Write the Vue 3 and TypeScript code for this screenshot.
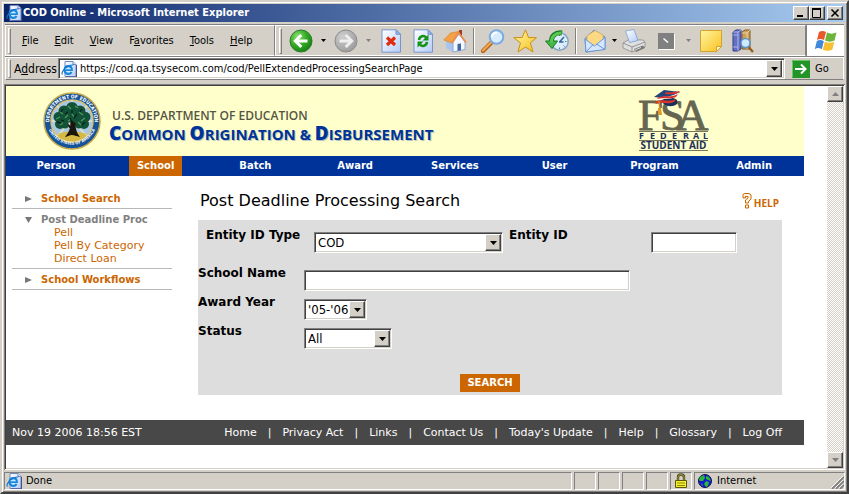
<script setup lang="ts">
import { ref } from 'vue'

const menus = ['File', 'Edit', 'View', 'Favorites', 'Tools', 'Help']
const accessKeys: Record<string, number> = { Favorites: 1 }
const tabs = ['Person', 'School', 'Batch', 'Award', 'Services', 'User', 'Program', 'Admin']
const activeTab = ref('School')
const footerLinks = ['Home', 'Privacy Act', 'Links', 'Contact Us', "Today's Update", 'Help', 'Glossary', 'Log Off']
const subLinks = ['Pell', 'Pell By Category', 'Direct Loan']

const address = ref('https://cod.qa.tsysecom.com/cod/PellExtendedProcessingSearchPage')
const entityType = ref('COD')
const entityId = ref('')
const schoolName = ref('')
const awardYear = ref("'05-'06")
const status = ref('All')

function keyAt(menu: string): number {
  return accessKeys[menu] ?? 0
}
</script>

<template>
  <div class="window">
    <svg class="defs" aria-hidden="true">
      <defs>
        <linearGradient id="paper" x1="0" y1="0" x2="1" y2="1">
          <stop offset="0" stop-color="#ffffff" />
          <stop offset="1" stop-color="#b4cdf6" />
        </linearGradient>
        <radialGradient id="green" cx="0.35" cy="0.3" r="0.8">
          <stop offset="0" stop-color="#8fe070" />
          <stop offset="0.5" stop-color="#35ab25" />
          <stop offset="1" stop-color="#117a10" />
        </radialGradient>
        <radialGradient id="grey" cx="0.35" cy="0.3" r="0.8">
          <stop offset="0" stop-color="#cfcfcf" />
          <stop offset="1" stop-color="#989898" />
        </radialGradient>
        <linearGradient id="gold" x1="0" y1="0" x2="1" y2="1">
          <stop offset="0" stop-color="#fff6a0" />
          <stop offset="1" stop-color="#f8c020" />
        </linearGradient>
        <symbol id="ie-page" viewBox="0 0 16 16">
          <path d="M4 .5h8l3 3v12H4z" fill="url(#paper)" stroke="#7088c0" />
          <path d="M12 .5v3h3" fill="#dbe7ff" stroke="#7088c0" />
          <path d="M15.500 4v12H5" fill="none" stroke="#405090" />
          <path d="M3.600 9h7.200c0-5-7-5.200-7.200 0c0 4.600 5.400 4.900 6.900 2" fill="none" stroke="#1689dd" stroke-width="2.200" />
          <path d="M1.500 13.500C-1 12 6 3.500 12.500 4" fill="none" stroke="#1b70c4" stroke-width="1.100" />
          <path d="M4 8h6" stroke="#a4e4ff" stroke-width=".7" />
        </symbol>
        <symbol id="sheet" viewBox="0 0 24 24">
          <path d="M3 .8h14l4.500 4.500V23.200H3z" fill="url(#paper)" stroke="#7795cc" />
          <path d="M17 .8v4.500h4.500z" fill="#91b2ec" stroke="#7795cc" />
        </symbol>
      </defs>
    </svg>

    <header class="titlebar">
      <svg class="small-icon"><use href="#ie-page" /></svg>
      <span class="caption">COD Online - Microsoft Internet Explorer</span>
      <div class="window-buttons">
        <button class="raised" aria-label="Minimize">
          <svg viewBox="0 0 12 10"><path d="M2 8h6" stroke="#000" stroke-width="2" /></svg>
        </button>
        <button class="raised" aria-label="Maximize">
          <svg viewBox="0 0 12 10"><path d="M1.500 1v8.500h8V1M1 1h9" fill="none" stroke="#000" stroke-width="1" /><path d="M1 1h9" stroke="#000" stroke-width="2" /></svg>
        </button>
        <button class="raised close" aria-label="Close">
          <svg viewBox="0 0 12 10"><path d="M2.500 1.500l7 7m0-7l-7 7" stroke="#000" stroke-width="1.600" /></svg>
        </button>
      </div>
    </header>

    <div class="bars">
      <div class="bar-row">
        <nav class="menus">
          <i class="grip"></i>
          <button v-for="m in menus" :key="m">{{ m.slice(0, keyAt(m)) }}<u>{{ m[keyAt(m)] }}</u>{{ m.slice(keyAt(m) + 1) }}</button>
        </nav>
        <div class="tools">
          <i class="grip"></i>
          <button class="tool" aria-label="Back">
            <svg viewBox="0 0 24 24"><circle cx="12" cy="12" r="11" fill="url(#green)" stroke="#2e7d2c" /><path d="M18.500 12H7M12.300 6L6.300 12l6 6" fill="none" stroke="#fff" stroke-width="3" /></svg>
          </button>
          <button class="caret" aria-label="Back history"><svg viewBox="0 0 5 3"><path d="M0 0h5L2.500 3z" /></svg></button>
          <button class="tool" aria-label="Forward">
            <svg viewBox="0 0 24 24"><circle cx="12" cy="12" r="11" fill="url(#grey)" stroke="#8c8c8c" /><path d="M5.500 12H17M11.700 6l6 6l-6 6" fill="none" stroke="#eee" stroke-width="3" /></svg>
          </button>
          <button class="caret dim" aria-label="Forward history"><svg viewBox="0 0 5 3"><path d="M0 0h5L2.500 3z" /></svg></button>
          <button class="tool" aria-label="Stop">
            <svg viewBox="0 0 24 24"><use href="#sheet" /><path d="M8 8.500l8 7.500m0-7.500l-8 7.500" stroke="#e02c10" stroke-width="3.200" /></svg>
          </button>
          <button class="tool" aria-label="Refresh">
            <svg viewBox="0 0 24 24"><use href="#sheet" /><path d="M8 11c.5-4 5-5 7-2.500M16 13c-.5 4-5 5-7 2.500" fill="none" stroke="#169216" stroke-width="2.500" /><path d="M17.500 5.500v6h-6zM6.500 18.500v-6h6z" fill="#169216" /></svg>
          </button>
          <button class="tool" aria-label="Home">
            <svg viewBox="0 0 24 24"><path d="M16 1h3v8h-3z" fill="#a03c28" /><path d="M3 11l7 2v10l-7-4z" fill="#a9c5ee" /><path d="M10 13l6-8l6 8v7.500L10 23z" fill="#f3f7ff" stroke="#7b99ce" stroke-width=".8" /><path d="M14.500 15l3.500-.5v6.800l-3.500.7z" fill="#4264a8" /><path d="M.8 11L7.500 4l8-1.500L9 14z" fill="#f4a245" stroke="#d27c28" stroke-width=".6" /><path d="M9 14l6.500-10.500L23 13.500" fill="none" stroke="#ee8c48" stroke-width="1.600" /></svg>
          </button>
          <i class="sep"></i>
          <button class="tool" aria-label="Search">
            <svg viewBox="0 0 24 24"><path d="M2 22l8-8" stroke="#b76018" stroke-width="4.400" stroke-linecap="round" /><path d="M2 21.500l8-8" stroke="#f3a850" stroke-width="2.200" stroke-linecap="round" /><circle cx="15.500" cy="8" r="6.800" fill="#d5edfd" stroke="#7daadf" stroke-width="2" /><path d="M11 8c0-3 2-4.500 5-4.500" fill="none" stroke="#fff" stroke-width="2" /></svg>
          </button>
          <button class="tool" aria-label="Favorites">
            <svg viewBox="0 0 24 24"><path d="M12.500.8l3 7.700l8 .2l-6.200 5.200l2.800 9.100l-7.600-5l-7.500 5l2.500-9.100L.8 8.700l8.300-.2z" fill="url(#gold)" stroke="#c89018" /></svg>
          </button>
          <button class="tool" aria-label="History">
            <svg viewBox="0 0 24 24"><circle cx="14.500" cy="12.500" r="8.700" fill="#dceefb" stroke="#87a5c4" stroke-width="1.500" /><path d="M14.500 13l4.500-5M14 13h4.500" stroke="#34699c" stroke-width="1.600" /><path d="M21.500 12.500h-1.500M19.500 17.500l-1-1M14.500 20v-1.500M14.500 5.500V7" stroke="#5a7890" /><path d="M6.500 13C6 7 10.500 3 17 4" fill="none" stroke="#187a20" stroke-width="5" /><path d="M.5 12h12L7 19.500z" fill="#45b845" stroke="#187a20" /><path d="M6.500 13.500C6 7.500 10.500 3.500 16.500 4" fill="none" stroke="#58c850" stroke-width="3" /></svg>
          </button>
          <i class="sep"></i>
          <button class="tool" aria-label="Mail">
            <svg viewBox="0 0 24 24"><path d="M2 9.500L11 1l11 7v12L3 23z" fill="#8eb6f0" stroke="#668fd0" /><path d="M4 7L12 1.500L20 6v8l-8 4l-8-5z" fill="#fdd983" stroke="#d7a84d" stroke-width=".7" /><path d="M2 10l9.500 7L22 8.500v12L3 23z" fill="#d4e7ff" stroke="#6b95d6" /><path d="M3 23l7-7.500M22 20.500L13.500 15" stroke="#6b95d6" /></svg>
          </button>
          <button class="caret compact" aria-label="Mail options"><svg viewBox="0 0 5 3"><path d="M0 0h5L2.500 3z" /></svg></button>
          <button class="tool" aria-label="Print">
            <svg viewBox="0 0 24 24"><path d="M1 14l6-3.500l14 .5l2 2v5L10 23l-9-4z" fill="#dfdfdf" stroke="#8a8a8a" stroke-width=".8" /><path d="M3.500 2L12 .5l4 11l-8.500 2z" fill="url(#paper)" stroke="#7e9ed0" stroke-width=".8" /><path d="M1 14l9 4l13-5M10 18v5" fill="none" stroke="#959595" /><path d="M12 20l9-3.500l2 2.500l-9 4z" fill="#777" /><path d="M13 21l6-2.500" stroke="#ddd" /></svg>
          </button>
          <button class="tool" aria-label="Edit">
            <svg viewBox="0 0 24 24"><path d="M5 20.500h15.500V5" fill="none" stroke="#fff" /><path d="M4 4h16v16H4z" fill="#808080" /><path d="M9.500 9.500l4.500 4" stroke="#fff" stroke-width="1.500" /></svg>
          </button>
          <button class="caret dim" aria-label="Edit options"><svg viewBox="0 0 5 3"><path d="M0 0h5L2.500 3z" /></svg></button>
          <button class="tool" aria-label="Discuss">
            <svg viewBox="0 0 24 24"><path d="M1.500 1.500h21v16l-5 5h-16z" fill="url(#gold)" stroke="#d3a32e" /><path d="M17.500 22.500v-5h5z" fill="#fff8c2" stroke="#d3a32e" /></svg>
          </button>
          <button class="tool" aria-label="Research">
            <svg viewBox="0 0 24 24"><path d="M2 3l3-2h5v19l-3 2H2z" fill="#6671c4" stroke="#333b88" /><path d="M2 3h5v19M2 6h5M2 18h5M7 3l3-2" fill="none" stroke="#bfc6f4" stroke-width=".8" /><path d="M11 3l3-2h5v19h-8z" fill="#caa05c" stroke="#7c5a26" /><path d="M11 4h5v16M16 4l3-3" fill="none" stroke="#f7e0a3" stroke-width=".8" /><path d="M17.500 18l4.500 5" stroke="#9c5c1c" stroke-width="2.500" /><circle cx="14.500" cy="14" r="4.500" fill="#cdeafb" stroke="#5c93c8" stroke-width="1.500" /></svg>
          </button>
        </div>
        <div class="brand">
          <svg viewBox="0 0 24 22" role="img" aria-label="Windows">
            <path d="M5 2c2-1.500 4.500-1.500 7 0l-2 8c-2.500-1.500-5-1.500-7 0z" fill="#e8582c" />
            <path d="M13 2.500c3 1.500 6 1.500 9.500 0l-2 8c-3 1.500-6.500 1.500-9.500 0z" fill="#6cb53c" />
            <path d="M2.800 11.200c2-1.500 4.500-1.500 7 0l-2 8c-2.500-1.500-5-1.500-7 0z" fill="#3f8ad8" />
            <path d="M10.800 11.700c3 1.500 6 1.500 9.500 0l-2 8c-3 1.500-6.500 1.500-9.500 0z" fill="#f8c030" />
          </svg>
        </div>
      </div>

      <form class="address-row" @submit.prevent>
        <i class="grip"></i>
        <label for="address">A<u>d</u>dress</label>
        <div class="address-box sunken">
          <svg class="small-icon"><use href="#ie-page" /></svg>
          <input id="address" v-model="address" type="text" spellcheck="false" />
          <button type="button" class="raised drop" aria-label="Recent addresses"><svg viewBox="0 0 7 4"><path d="M0 0h7L3.500 4z" /></svg></button>
        </div>
        <button class="go">
          <svg viewBox="0 0 18 18"><path d="M0 0h18v18H0z" fill="#239428" /><path d="M.5 17.500V.5h17" fill="none" stroke="#69c565" /><path d="M3 9h10M9 4.500L13.500 9L9 13.500" fill="none" stroke="#fff" stroke-width="2" /></svg>
          <span>Go</span>
        </button>
      </form>
    </div>

    <div class="viewport">
      <main class="page">
        <div class="banner">
          <svg class="seal" viewBox="0 0 58 58" role="img" aria-label="Department of Education seal">
            <defs>
              <path id="ring-top" d="M6.500 31A22.600 22.600 0 1 1 51.500 31" />
              <path id="ring-bottom" d="M4.500 34A25.400 25.400 0 0 0 53.500 34" />
            </defs>
            <circle cx="29" cy="29" r="28" fill="#15539a" stroke="#c4a94b" stroke-width="1.500" />
            <circle cx="29" cy="29" r="21" fill="#a9c8e6" stroke="#d8c16a" stroke-width="1.500" />
            <path d="M29 8v42M9 29h40M14 14l30 30M44 14L14 44" stroke="#e6e4bd" stroke-width="1.500" />
            <path d="M14 43c8-5 22-5 30 0c-8 9-22 9-30 0z" fill="#d5b943" />
            <path d="M27 28c1 7 0 11-5 17c4-1 5-2 7-2s4 1 8 2c-4-5-5-10-4-17z" fill="#1c170c" />
            <path d="M28 36l-8-8M31 34l8-7M29 35V20" stroke="#1c170c" stroke-width="2" />
            <g fill="#125239">
              <circle cx="29" cy="16" r="6" /><circle cx="21" cy="19" r="5.500" /><circle cx="37" cy="19" r="5.500" />
              <circle cx="15.500" cy="25" r="5" /><circle cx="42.500" cy="25" r="5" /><circle cx="24" cy="25" r="6" />
              <circle cx="34" cy="25" r="6" /><circle cx="17" cy="32" r="5" /><circle cx="41" cy="32" r="5" /><circle cx="36" cy="33" r="3.500" /><circle cx="22" cy="33" r="3.500" />
            </g>
            <path d="M17 20l3 2M25 14l3 3M32 14l3 2M13 27l4-2M22 26l3-3M29 22l2 3M36 20l4 3M38 29l4-3M17 33l3-2M35 30l3 3M25 29l3-2" stroke="#4f9a58" stroke-width="1.200" />
            <path d="M20 17l-2 3M29 18v3M34 22l-3 4M14 30l4 1M42 30l-3 3M25 20l-3 2M27 26l2 4M39 17l-2 3M21 29l-3-1" stroke="#06201a" stroke-width="1.300" />
            <text class="seal-text"><textPath href="#ring-top" startOffset="50%">DEPARTMENT OF EDUCATION</textPath></text>
            <text class="seal-text lower"><textPath href="#ring-bottom" startOffset="50%">UNITED STATES OF AMERICA</textPath></text>
          </svg>
          <div class="banner-text">
            <div class="dept">U.S. DEPARTMENT OF EDUCATION</div>
            <div class="system"><b>C</b>OMMON <b>O</b>RIGINATION &amp; <b>D</b>ISBURSEMENT</div>
          </div>
          <svg class="fsa" viewBox="0 0 72 64" role="img" aria-label="FSA Federal Student Aid">
            <text y="41" x="0 22 38" class="fsa-big">FSA</text>
            <path d="M22 12c7-4 13-4 17-1v4c-4 3-9 3-13 0z" fill="#17315e" />
            <path d="M16 8L26 1l16 2l-9 7z" fill="#24447a" />
            <path d="M20 10c6-4 10 0 21-7l-2 4c-8 5-12 1-21 5z" fill="#fff" />
            <path d="M28 3c5 1 8 0 14-1l-2 2c-5 2-8 1-13 1zM21 8c7-2 11 1 19-3l-2 3c-8 3-12 0-19 2zM17 13c7-4 14 1 21-3l-2 3c-7 3-13-1-18 2z" fill="#d8362a" />
            <path d="M21 12l1 8" stroke="#d48a1e" stroke-width="1.500" /><path d="M20 19h3l1 7h-4z" fill="#e09a28" />
            <path d="M1 42.500h69M1 51.500h69M1 61.500h69" stroke="#77775a" />
            <text y="50" x="1 12 22 34 45 55 65" class="fsa-line">FEDERAL</text>
            <text y="60" x="35.500" class="fsa-sub">STUDENT AID</text>
          </svg>
        </div>

        <nav class="tabs">
          <a v-for="t in tabs" :key="t" href="#" :class="{ active: t === activeTab }" @click.prevent="activeTab = t">{{ t }}</a>
        </nav>

        <div class="body">
          <aside class="side">
            <section>
              <a class="group" href="#"><svg viewBox="0 0 8 8"><path d="M0 1l7 3l-7 3z" /></svg>School Search</a>
            </section>
            <section>
              <a class="group open" href="#"><svg viewBox="0 0 8 8"><path d="M0 1h7L3.500 7z" /></svg>Post Deadline Proc</a>
              <a v-for="l in subLinks" :key="l" class="sub" href="#">{{ l }}</a>
            </section>
            <section>
              <a class="group" href="#"><svg viewBox="0 0 8 8"><path d="M0 1l7 3l-7 3z" /></svg>School Workflows</a>
            </section>
          </aside>

          <section class="content">
            <div class="heading">
              <h1>Post Deadline Processing Search</h1>
              <a class="help" href="#">
                <svg viewBox="0 0 10 16" aria-hidden="true"><path d="M1 1.500l1.500-1h4.500l2 1.500v4L6.500 8.500V10H3.500V7L6 5V3.500H3.500V5H1zM3.500 12h3v3h-3z" fill="#fff6e6" stroke="#cc6600" /></svg>HELP
              </a>
            </div>
            <form class="panel" @submit.prevent>
              <div class="row first">
                <label for="etype">Entity ID Type</label>
                <div class="select wide">
                  <select id="etype" v-model="entityType" class="sunken"><option>COD</option></select>
                  <span class="raised arrow"><svg viewBox="0 0 7 4"><path d="M0 0h7L3.500 4z" /></svg></span>
                </div>
                <label for="eid">Entity ID</label>
                <input id="eid" v-model="entityId" class="sunken" type="text" />
              </div>
              <div class="row">
                <label for="sname">School Name</label>
                <input id="sname" v-model="schoolName" class="sunken name" type="text" />
              </div>
              <div class="row">
                <label for="year">Award Year</label>
                <div class="select year">
                  <select id="year" v-model="awardYear" class="sunken"><option>'05-'06</option></select>
                  <span class="raised arrow"><svg viewBox="0 0 7 4"><path d="M0 0h7L3.500 4z" /></svg></span>
                </div>
              </div>
              <div class="row">
                <label for="status">Status</label>
                <div class="select status">
                  <select id="status" v-model="status" class="sunken"><option>All</option></select>
                  <span class="raised arrow"><svg viewBox="0 0 7 4"><path d="M0 0h7L3.500 4z" /></svg></span>
                </div>
              </div>
              <button class="search">SEARCH</button>
            </form>
          </section>
        </div>

        <footer class="footer">
          <time>Nov 19 2006 18:56 EST</time>
          <nav>
            <template v-for="(l, i) in footerLinks" :key="l">
              <span v-if="i">|</span>
              <a href="#">{{ l }}</a>
            </template>
          </nav>
        </footer>
      </main>

      <div class="scrollbar">
        <button class="raised" aria-label="Scroll up"><svg viewBox="0 0 7 4"><path d="M0 4h7L3.500 0z" /></svg></button>
        <button class="raised" aria-label="Scroll down"><svg viewBox="0 0 7 4"><path d="M0 0h7L3.500 4z" /></svg></button>
      </div>
    </div>

    <div class="statusbar">
      <div class="cell message"><svg class="small-icon"><use href="#ie-page" /></svg>Done</div>
      <div v-for="n in 4" :key="n" class="cell"></div>
      <div class="cell">
        <svg class="small-icon" viewBox="0 0 16 16" role="img" aria-label="Secure"><path d="M5 7V4.500c0-4 6-4 6 0V7" fill="none" stroke="#4a4a10" stroke-width="2.400" /><path d="M5 7V4.500c0-4 6-4 6 0V7" fill="none" stroke="#b5b060" stroke-width=".8" /><path d="M2.500 7.500h11v7h-11z" fill="#f5ee32" stroke="#5c5a00" /><path d="M4 10h8M4 12.500h8" stroke="#8d8900" /></svg>
      </div>
      <div class="cell zone">
        <svg class="small-icon" viewBox="0 0 16 16" aria-hidden="true"><circle cx="8" cy="8" r="6.500" fill="#1818d0" stroke="#101050" /><path d="M3 4l4-2l1 3l-2 3H3L2 7zM9 3l3 1l2 4l-3-1l-2-1zM9 8l3 1l-1 4l-2 1l-2-3zM4 10l2 2l-1 1z" fill="#28b838" /></svg>
        <span>Internet</span>
        <svg class="resize" viewBox="0 0 14 14" aria-hidden="true"><path d="M2 14L14 2M6 14l8-8M10 14l4-4" stroke="#808080" stroke-width="1.800" /><path d="M1 13L13 1M5 13l8-8M9 13l4-4" stroke="#fff" stroke-width=".8" /></svg>
      </div>
    </div>
  </div>
</template>

<style>
html, body { background: #d4d0c8; }
body { margin: 0; }
</style>

<style scoped>
* { box-sizing: border-box; }
.window {
  display: flex;
  flex-direction: column;
  min-height: 100vh;
  padding: 2px;
  background: #d4d0c8;
  border: 2px solid;
  border-color: #d4d0c8 #404040 #404040 #d4d0c8;
  box-shadow: inset 1px 1px #fff, inset -1px -1px #808080;
  font: 11px/14px "DejaVu Sans Condensed", "DejaVu Sans", sans-serif;
  color: #000;
}
.defs { position: absolute; width: 0; height: 0; }
button { margin: 0; padding: 0; border: 0; background: none; font: inherit; color: inherit; }
input, select { min-width: 0; margin: 0; font: inherit; color: inherit; border-radius: 0; outline: 0; }
a { text-decoration: none; }
svg { display: block; flex: none; }
.small-icon { width: 16px; height: 16px; }
.raised {
  display: grid;
  place-items: center;
  background: #d4d0c8;
  border: 1px solid;
  border-color: #fff #404040 #404040 #fff;
  box-shadow: inset -1px -1px #808080;
}
.sunken {
  background: #fff;
  border: 1px solid;
  border-color: #808080 #fff #fff #808080;
  box-shadow: inset 1px 1px #404040, inset -1px -1px #d4d0c8;
}

.titlebar {
  display: flex;
  align-items: center;
  height: 18px;
  padding: 0 2px;
  background: linear-gradient(90deg, #0a246a, #a6caf0);
  color: #fff;
}
.caption { flex: 1; padding-left: 1px; font-weight: bold; }
.window-buttons { display: flex; }
.window-buttons .raised { width: 16px; height: 14px; }
.window-buttons .close { margin-left: 2px; }
.window-buttons svg { width: 12px; height: 10px; }

.bars { padding: 2px 1px 4px; }
.bar-row { display: flex; height: 33px; border-bottom: 1px solid #808080; border-top: 1px solid #808080; }
.menus, .tools { display: flex; align-items: center; border: 1px solid; border-color: #fff #808080 #fff #fff; }
.menus { flex: none; width: 270px; }
.tools { flex: 1; padding-left: 1px; }
.grip { flex: none; width: 3px; height: 26px; margin: 0 3px 0 2px; border: 1px solid; border-color: #fff #808080 #808080 #fff; }
.menus button { padding: 0 8px; }
.tool { width: 32px; flex: none; display: grid; place-items: center; }
.tool svg { width: 24px; height: 24px; }
.caret { width: 13px; display: grid; place-items: center; }
.caret svg { width: 5px; height: 3px; }
.caret.compact { width: 7px; }
.caret.dim { fill: #808080; }
.sep { flex: none; width: 2px; height: 26px; margin: 0 2px; border-left: 1px solid #808080; border-right: 1px solid #fff; }
.brand { display: grid; place-items: center; width: 38px; background: #fff; border-left: 1px solid #808080; }
.brand svg { width: 24px; height: 22px; }
.address-row { display: flex; align-items: center; height: 23px; border: 1px solid; border-color: #fff #fff #808080; }
.address-row .grip { height: 19px; }
.address-row label { padding-right: 1px; font-size: 12px; }
.address-box { display: flex; align-items: center; flex: 1; height: 21px; padding: 2px; }
.address-box input { flex: 1; padding: 0 3px; border: 0; background: none; }
.drop { width: 16px; height: 17px; }
.drop svg, .arrow svg, .scrollbar svg { width: 7px; height: 4px; }
.go { display: flex; align-items: center; gap: 5px; width: 58px; padding-left: 7px; }
.go svg { width: 18px; height: 18px; }

.viewport {
  display: flex;
  flex: 1;
  padding: 2px;
  background: #fff;
  box-shadow: inset 1px 1px #808080, inset -1px -1px #fff, inset 2px 2px #404040, inset -2px -2px #d4d0c8;
}
.page { flex: 1; min-width: 0; margin-right: 23px; font-family: "DejaVu Sans", sans-serif; }
.scrollbar {
  display: flex;
  flex-direction: column;
  justify-content: space-between;
  width: 16px;
  background: repeating-conic-gradient(#fff 0 25%, #d4d0c8 0 50%) 0 0 / 2px 2px;
}
.scrollbar .raised { height: 16px; fill: #808080; }

.banner { display: flex; align-items: center; height: 70px; padding: 0 94px 0 37px; background: #ffffcc; }
.seal { width: 58px; height: 58px; }
.seal-text { font: bold 5px "DejaVu Sans Condensed", sans-serif; fill: #fff; text-anchor: middle; }
.seal-text.lower { font-size: 4px; }
.banner-text { flex: 1; padding: 10px 0 0 8px; font-family: "Open Sans", sans-serif; white-space: nowrap; }
.dept { padding-left: 3px; font-size: 12px; line-height: 14px; font-weight: 600; color: #555544; }
.system { font-size: 15px; line-height: 20px; font-weight: 700; color: #003399; text-shadow: 1px 1px #b9c4b8; }
.system b { font-size: 19px; }
.fsa { width: 72px; height: 64px; }
.fsa-big { font: 45px "Liberation Serif", serif; fill: #666650; stroke: #666650; stroke-width: .8px; }
.fsa-line { font: bold 9px "Open Sans", sans-serif; fill: #1b3158; }
.fsa-sub { font: bold 10px "Open Sans", sans-serif; fill: #1b3158; text-anchor: middle; }

.tabs { display: grid; grid-template-columns: repeat(8, 1fr); justify-items: center; background: #003399; }
.tabs a { padding: 0 8px; font-size: 10px; font-weight: bold; line-height: 20px; color: #fff; }
.tabs .active { background: #cc6600; }

.body { display: flex; }
.side { width: 166px; padding: 13px 0 0 6px; }
.side section { padding: 4px 0 3px; border-bottom: 1px solid #b8b8b8; }
.side section:first-child { padding: 3px 0; }
.group { display: flex; align-items: center; gap: 8px; padding-left: 13px; font-size: 10px; font-weight: bold; line-height: 13px; color: #cc6600; }
.group.open { color: #808080; }
.group svg { width: 8px; height: 8px; fill: #777; }
.sub { display: block; padding-left: 42px; font-size: 11px; line-height: 13px; color: #cc6600; }
.content { flex: 1; min-width: 0; padding: 0 22px 25px 26px; }
.heading { display: flex; align-items: center; height: 44px; padding: 5px 3px 0 2px; }
h1 { flex: 1; margin: 0; font-size: 16px; font-weight: normal; line-height: 20px; }
.help { display: flex; align-items: flex-end; gap: 2px; font: bold 10px/12px "Open Sans", sans-serif; color: #cc6600; }
.help svg { width: 10px; height: 16px; }

.panel { display: flex; flex-direction: column; gap: 4px; padding: 8px 0 3px; background: #dddddd; }
.row { display: grid; grid-template-columns: 106px 1fr; align-items: start; }
.row.first { grid-template-columns: 108px 189px 148px 86px; padding-left: 8px; margin-bottom: 9px; }
.row.first .select + label { padding-left: 6px; }
.row label { font-size: 12px; font-weight: bold; line-height: 14px; white-space: nowrap; }
.row input { width: 100%; height: 21px; margin-top: 4px; padding: 2px 4px; }
.row .name { width: 326px; }
.select { display: grid; grid-template-columns: 1fr auto; margin-top: 4px; }
.select select { grid-area: 1 / 1 / 2 / 3; height: 21px; padding: 0 16px 0 3px; appearance: none; font: 13px/17px "DejaVu Sans Condensed", sans-serif; }
.arrow { grid-area: 1 / 2; width: 16px; height: 17px; margin: 2px; pointer-events: none; }
.year { width: 63px; }
.status { width: 88px; }
.search { align-self: center; width: 60px; height: 18px; margin-top: 21px; background: #cc6600; color: #fff; font-size: 10px; font-weight: bold; }

.footer { display: flex; align-items: center; justify-content: space-between; height: 25px; padding: 0 22px 0 6px; background: #484848; color: #fff; font-size: 11px; }
.footer nav { display: flex; gap: 11px; }
.footer a { color: #fff; }

.statusbar { display: flex; gap: 2px; height: 20px; padding-top: 2px; }
.cell { display: flex; align-items: center; width: 22px; height: 18px; padding: 0 2px; border: 1px solid; border-color: #808080 #fff #fff #808080; }
.message { flex: 1; gap: 4px; padding: 0 1px; }
.zone { width: 151px; gap: 4px; padding-right: 0; }
.zone span { flex: 1; }
.resize { width: 14px; height: 14px; align-self: flex-end; }
</style>
